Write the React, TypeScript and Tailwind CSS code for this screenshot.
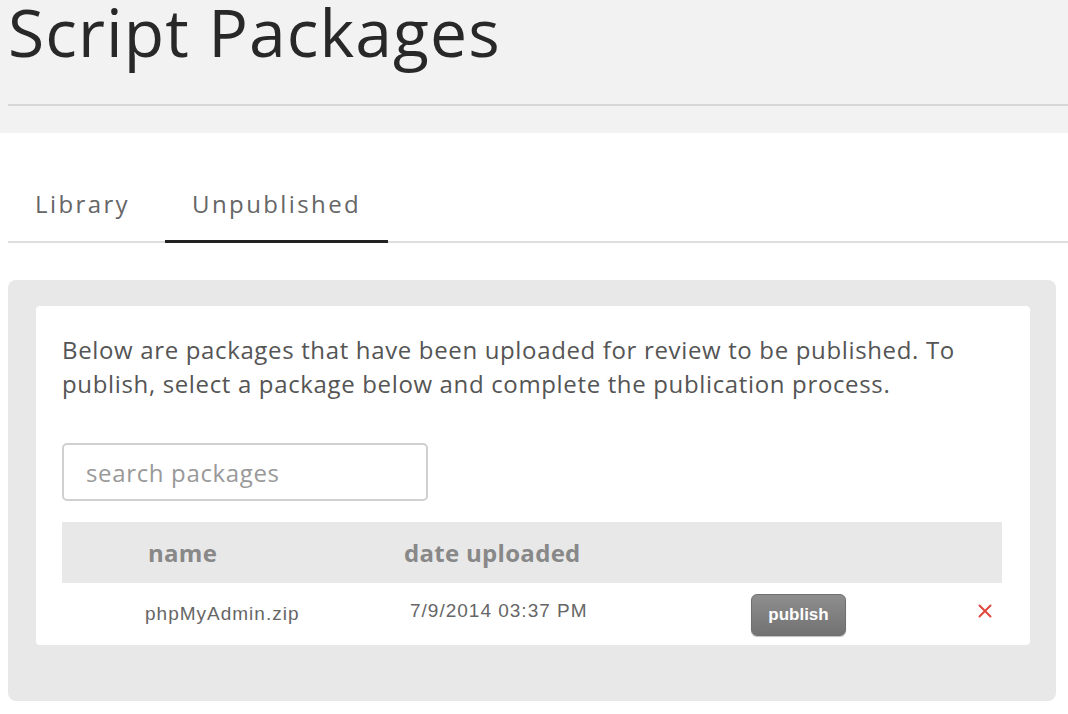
import { useState } from "react";

const packages = [{ name: "phpMyAdmin.zip", uploaded: "7/9/2014 03:37 PM" }];

export default function App() {
  const [tab, setTab] = useState("Unpublished");
  const [query, setQuery] = useState("");

  const rows = packages.filter((p) =>
    p.name.toLowerCase().includes(query.toLowerCase())
  );

  return (
    <div className="min-h-screen bg-white font-['Open_Sans',sans-serif] text-[#333]">
      <div className="bg-[#f2f2f2] pl-2 pb-[27px]">
        <h1 className="text-[66px] leading-[62px] font-normal tracking-[1.1px] text-[#282828]">
          Script Packages
        </h1>
        <div className="mt-[42px] h-[2px] bg-[#d6d6d6]" />
      </div>

      <div className="mt-[55px] ml-2 flex border-b-2 border-[#dedede]">
        {["Library", "Unpublished"].map((t) => (
          <button
            key={t}
            onClick={() => setTab(t)}
            className={`-mb-[2px] mr-2 px-[27px] pb-[20px] text-[24px] leading-[32px] tracking-[2.4px] text-[#666] border-b-[3px] ${
              tab === t ? "border-[#222]" : "border-transparent"
            }`}
          >
            {t}
          </button>
        ))}
      </div>

      <div className="mt-[37px] ml-2 mr-3 rounded-lg bg-[#e8e8e8] pt-[26px] pl-[28px] pr-[26px] pb-[56px]">
        <div className="rounded bg-white pl-[26px] pr-[28px] pt-[27px]">
          <p className="text-[24px] leading-[34px] tracking-[0.65px] text-[#555]">
            Below are packages that have been uploaded for review to be published. To
            publish, select a package below and complete the publication process.
          </p>

          <input
            value={query}
            onChange={(e) => setQuery(e.target.value)}
            placeholder="search packages"
            className="mt-[42px] block h-[58px] w-[366px] rounded-[5px] border-2 border-[#d0d0d0] px-[22px] text-[24px] tracking-[0.65px] text-[#555] outline-none placeholder:text-[#999]"
          />

          <div className="mt-[21px]">
            <div className="flex h-[61px] items-center bg-[#e8e8e8] pl-[86px] text-[24px] font-bold tracking-[0.3px] text-[#888]">
              <div className="w-[256px]">name</div>
              <div>date uploaded</div>
            </div>

            {rows.map((p) => (
              <div
                key={p.name}
                className="flex h-[62px] items-center pl-[83px] pr-[10px] font-['Liberation_Sans',Arial,sans-serif] text-[19px] tracking-[1px] text-[#666]"
              >
                <div className="w-[265px] pt-[1px]">{p.name}</div>
                <div className="w-[341px] -mt-[5px]">{p.uploaded}</div>
                <button className="mt-[1px] h-[42px] w-[95px] rounded-[6px] border border-[#707070] bg-gradient-to-b from-[#8e8e8e] to-[#727272] text-[17px] font-bold tracking-normal text-white shadow-[0_1px_1px_rgba(0,0,0,0.25)]">
                  publish
                </button>
                <button className="ml-auto -mt-[6px]" aria-label="delete">
                  <svg width="14" height="14" viewBox="0 0 14 14">
                    <path
                      d="M1.5 1.5 L12.5 12.5 M12.5 1.5 L1.5 12.5"
                      stroke="#e2463c"
                      strokeWidth="2"
                      strokeLinecap="round"
                    />
                  </svg>
                </button>
              </div>
            ))}
          </div>
        </div>
      </div>
    </div>
  );
}
